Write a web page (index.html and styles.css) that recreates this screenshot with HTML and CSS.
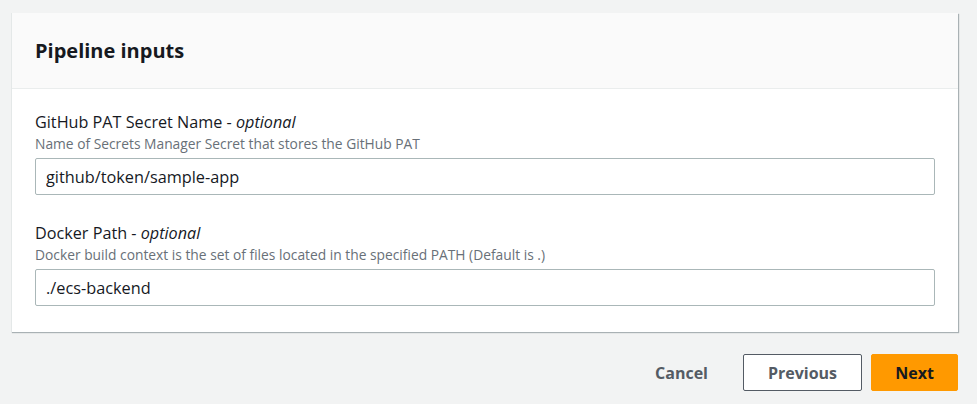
FILE: index.html
```html
<!DOCTYPE html>
<html lang="en">
<head>
  <meta charset="UTF-8" />
  <title>Pipeline inputs</title>
  <link rel="stylesheet" href="styles.css">
</head>
<body>
  <div class="wizard">
    <!-- Inputs container -->
    <section class="container">
      <div class="container-header">
        <h2>Pipeline inputs</h2>
      </div>
      <div class="container-body">
        <div class="field">
          <label class="field-label" for="patName">GitHub PAT Secret Name - <i>optional</i></label>
          <div class="field-desc">Name of Secrets Manager Secret that stores the GitHub PAT</div>
          <input class="field-input" id="patName" type="text" value="github/token/sample-app">
        </div>
        <div class="field">
          <label class="field-label" for="dockerPath">Docker Path - <i>optional</i></label>
          <div class="field-desc">Docker build context is the set of files located in the specified PATH (Default is .)</div>
          <input class="field-input" id="dockerPath" type="text" value="./ecs-backend">
        </div>
      </div>
    </section>

    <!-- Wizard actions -->
    <div class="actions">
      <button class="btn btn-link">Cancel</button>
      <button class="btn btn-normal">Previous</button>
      <button class="btn btn-primary">Next</button>
    </div>
  </div>
</body>
</html>
```

FILE: styles.css
```css
:root {
  --page-bg: #f2f3f3;
  --header-bg: #fafafa;
  --text: #16191f;
  --muted: #687078;
  --btn-text: #545b64;
  --input-border: #aab7b8;
  --orange: #ff9900;
  --font-family: 'Open Sans', 'Noto Sans', sans-serif;
}

html, body {
  margin: 0;
  padding: 0;
  background: var(--page-bg);
  font-family: var(--font-family);
  color: var(--text);
}

.wizard {
  padding: 13px 19px 0 11px;
}

/* CONTAINER */
.container {
  background: #fff;
  border-left: 1px solid #e4e8e8;
  box-shadow: 1px 1px 1px 0 rgba(0, 28, 36, 0.3);
}
.container-header {
  background: var(--header-bg);
  border-bottom: 1px solid #eaeded;
  height: 75px;
  padding: 0 23px;
  display: flex;
  align-items: center;
}
.container-header h2 {
  margin: 0;
  font-size: 20px;
  font-weight: 700;
}
.container-body {
  padding: 22px 23px 26px 23px;
  display: flex;
  flex-direction: column;
  gap: 27px;
}

/* FIELDS */
.field {
  display: flex;
  flex-direction: column;
}
.field-label {
  font-size: 16.2px;
  line-height: 22px;
}
.field-desc {
  font-size: 13.8px;
  line-height: 20px;
  color: var(--muted);
  margin-top: 1px;
  margin-bottom: 4px;
}
.field-input {
  box-sizing: border-box;
  height: 37px;
  width: 100%;
  border: 1px solid var(--input-border);
  border-radius: 2px;
  padding: 0 10px;
  font-family: var(--font-family);
  font-size: 16.3px;
  color: var(--text);
  background: #fff;
  outline: none;
}

/* ACTIONS */
.actions {
  display: flex;
  justify-content: flex-end;
  align-items: center;
  gap: 9px;
  margin-top: 22px;
}
.btn {
  font-family: var(--font-family);
  font-size: 16px;
  font-weight: 700;
  height: 37px;
  border-radius: 2px;
  cursor: pointer;
  box-sizing: border-box;
}
.btn-link {
  background: none;
  border: none;
  color: var(--btn-text);
  padding: 0 20px;
  margin-right: 6px;
}
.btn-normal {
  background: #fff;
  border: 1px solid var(--btn-text);
  color: var(--btn-text);
  width: 119px;
}
.btn-primary {
  background: var(--orange);
  border: 1px solid var(--orange);
  color: var(--text);
  width: 87px;
}
```
